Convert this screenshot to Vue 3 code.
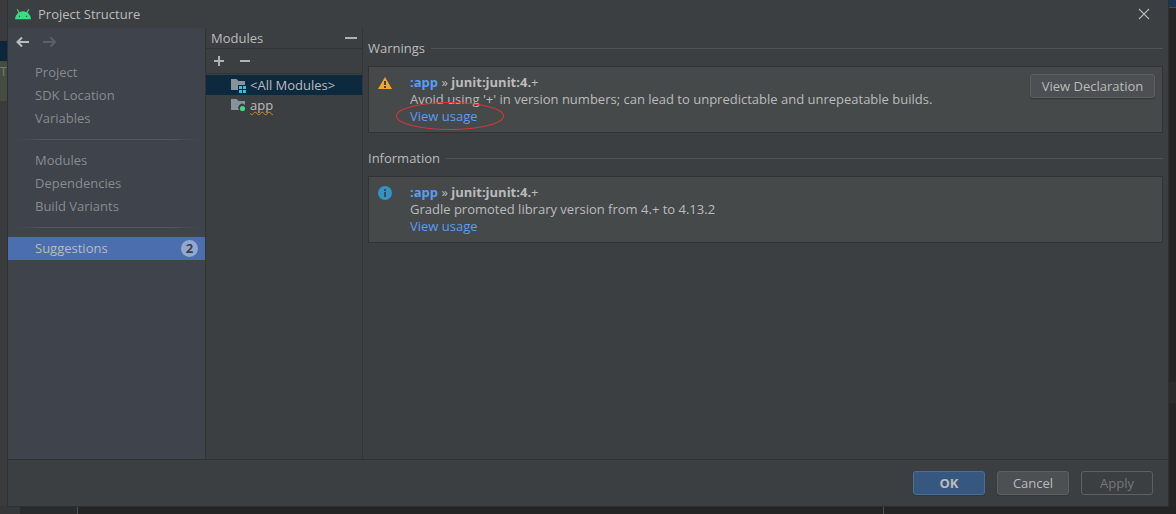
<script setup>
const navGroups = [
  [{ label: 'Project' }, { label: 'SDK Location' }, { label: 'Variables' }],
  [{ label: 'Modules' }, { label: 'Dependencies' }, { label: 'Build Variants' }],
  [{ label: 'Suggestions', count: 2, active: true }],
]

const sections = [
  {
    title: 'Warnings',
    kind: 'warning',
    text: "Avoid using '+' in version numbers; can lead to unpredictable and unrepeatable builds.",
    action: 'View Declaration',
    circled: true,
  },
  {
    title: 'Information',
    kind: 'info',
    text: 'Gradle promoted library version from 4.+ to 4.13.2',
  },
]
</script>

<template>
  <div class="desktop">
    <div class="edge-left">
      <div class="edge-selected"></div>
      <div class="edge-file">Te</div>
    </div>

    <main class="dialog">
      <header class="titlebar">
        <svg class="android" width="16" height="11" viewBox="0 0 16 11" aria-hidden="true">
          <path d="M0 10.300C.3 6 3.400 2.200 8 2.200s7.700 3.800 8 8.100z" fill="#3ddc84" />
          <path d="M4.300 4 2.500.7M11.700 4 13.500.7" stroke="#3ddc84" stroke-width="1.200" stroke-linecap="round" />
          <circle cx="4.500" cy="7.300" r=".7" fill="#2f4a3b" />
          <circle cx="11.500" cy="7.300" r=".7" fill="#2f4a3b" />
        </svg>
        <h1>Project Structure</h1>
        <button class="close" aria-label="Close">
          <svg width="12" height="12" viewBox="0 0 12 12"><path d="M1 1l10 10M11 1L1 11" stroke="#b4b6b7" stroke-width="1.100" /></svg>
        </button>
      </header>

      <div class="body">
        <nav class="sidebar">
          <div class="history">
            <button aria-label="Back">
              <svg width="14" height="12" viewBox="0 0 14 12"><path d="M13 6H1.500M6 1.500 1.500 6 6 10.500" fill="none" stroke="#b9bcbe" stroke-width="2" /></svg>
            </button>
            <button aria-label="Forward" disabled>
              <svg width="14" height="12" viewBox="0 0 14 12"><path d="M0 6h12M7.500 1.500 12 6 7.500 10.500" fill="none" stroke="#5d6064" stroke-width="2" /></svg>
            </button>
          </div>
          <div v-for="(group, i) in navGroups" :key="i" class="group">
            <a v-for="item in group" :key="item.label" href="#" class="nav-item" :class="{ active: item.active }">
              <span>{{ item.label }}</span>
              <span v-if="item.count" class="count">{{ item.count }}</span>
            </a>
          </div>
        </nav>

        <section class="modules">
          <div class="modules-head">
            <h2>Modules</h2>
            <button aria-label="Hide">
              <svg width="12" height="12" viewBox="0 0 12 12"><path d="M0 6h12" stroke="#afb1b3" stroke-width="2" /></svg>
            </button>
          </div>
          <div class="modules-tools">
            <button aria-label="Add">
              <svg width="12" height="12" viewBox="0 0 12 12"><path d="M1 6h10M6 1v10" stroke="#afb1b3" stroke-width="2" /></svg>
            </button>
            <button aria-label="Remove">
              <svg width="12" height="12" viewBox="0 0 12 12"><path d="M1 6h10" stroke="#afb1b3" stroke-width="2" /></svg>
            </button>
          </div>
          <ul>
            <li class="selected">
              <svg width="16" height="16" viewBox="0 0 16 16" aria-hidden="true">
                <path d="M0 2h5.500L7.500 4H14v4H7v5H0z" fill="#87939a" />
                <path d="M8 9h3v3H8zM12 9h3v3h-3zM8 13h3v3H8zM12 13h3v3h-3z" fill="#40b6e0" />
              </svg>
              <span>&lt;All Modules&gt;</span>
            </li>
            <li>
              <svg width="16" height="16" viewBox="0 0 16 16" aria-hidden="true">
                <path d="M0 2h5.500L7.500 4H14v4.100A3.600 3.600 0 0 0 8.200 13H0z" fill="#87939a" />
                <circle cx="11.500" cy="11.500" r="2.600" fill="#3ddc84" />
              </svg>
              <span class="typo">app</span>
            </li>
          </ul>
        </section>

        <div class="content">
          <section v-for="s in sections" :key="s.title">
            <h2 class="section-title">{{ s.title }}</h2>
            <article class="card">
              <svg v-if="s.kind === 'warning'" class="kind" width="14" height="14" viewBox="0 0 14 14" role="img" aria-label="Warning">
                <path d="M7 1l7 12H0z" fill="#f0a732" />
                <path d="M6 5h2v4H6zM6 10h2v2H6z" fill="#45443a" />
              </svg>
              <svg v-else class="kind" width="14" height="14" viewBox="0 0 14 14" role="img" aria-label="Information">
                <circle cx="7" cy="7" r="7" fill="#3592c4" />
                <path d="M6 3h2v2H6zM6 6h2v5H6z" fill="#3a4a52" />
              </svg>
              <div class="message">
                <p><a href="#" class="path">:app</a> » <b>junit:junit:4.</b>+</p>
                <p>{{ s.text }}</p>
                <p>
                  <a href="#" class="usage">View usage
                    <svg v-if="s.circled" class="ring" width="110" height="30" viewBox="0 0 110 30" aria-hidden="true">
                      <ellipse cx="55" cy="15" rx="53.500" ry="13.500" fill="none" stroke="#d63636" stroke-width="1.100" />
                    </svg>
                  </a>
                </p>
              </div>
              <button v-if="s.action" class="btn wide">{{ s.action }}</button>
            </article>
          </section>
        </div>
      </div>

      <footer>
        <button class="btn primary">OK</button>
        <button class="btn">Cancel</button>
        <button class="btn" disabled>Apply</button>
      </footer>
    </main>

    <div class="edge-right">
      <div class="edge-blue"></div>
      <div class="edge-dark"></div>
      <div class="edge-band"></div>
    </div>
    <div class="edge-bottom">
      <div class="tool-strip"></div>
      <div class="tree-strip"></div>
      <div class="editor-strip"></div>
      <div class="editor-strip last"></div>
    </div>
  </div>
</template>

<style>
body {
  margin: 0;
  background: #262728;
}
</style>

<style scoped>
.desktop {
  display: grid;
  grid-template-columns: 8px minmax(0, 1fr) 8px;
  grid-template-rows: 1fr 8px;
  min-height: 100vh;
  font: 13px/17px "Open Sans", "Noto Sans", sans-serif;
  color: #bbbbbb;
}
h1, h2, p, ul {
  margin: 0;
  padding: 0;
  font-size: 13px;
  font-weight: 400;
}
a {
  color: #589df6;
  text-decoration: none;
}
button {
  font: inherit;
  color: inherit;
  padding: 0;
  border: 0;
  background: none;
}
svg {
  display: block;
  flex: none;
}
.edge-left {
  background: #393b3c;
  padding-top: 41px;
}
.edge-selected {
  height: 20px;
  background: #0c263c;
}
.edge-file {
  height: 40px;
  line-height: 20px;
  background: #454d43;
  color: #77796f;
}
.edge-right {
  display: flex;
  flex-direction: column;
  background: #262626;
}
.edge-blue {
  height: 7px;
  background: #1d3657;
  border-bottom: 1px solid #4a4b4c;
}
.edge-dark {
  height: 374px;
}
.edge-band {
  height: 21px;
  background: #2c2c2c;
}
.edge-bottom {
  grid-column: 1 / -1;
  display: grid;
  grid-template-columns: 20px 57px 807fr 293fr;
  background: #242424;
}
.tool-strip {
  background: #353738;
}
.tree-strip {
  background: #292a2c;
}
.editor-strip {
  border-left: 1px solid #515151;
}
.dialog {
  position: relative;
  display: flex;
  flex-direction: column;
  background: #3c3f41;
  box-shadow: 0 0 0 1px #2d2f30;
}
.titlebar {
  display: flex;
  align-items: center;
  height: 28px;
  padding: 0 18px 0 7px;
}
.titlebar h1 {
  flex: 1;
  margin-left: 7px;
}
.body {
  flex: 1;
  display: grid;
  grid-template-columns: 198px 157px minmax(0, 1fr);
}
.sidebar {
  background: #3e434c;
  border-right: 1px solid #323435;
}
.history {
  display: flex;
  gap: 13px;
  padding: 8px 8px 13px;
}
.group + .group::before {
  content: "";
  display: block;
  height: 1px;
  margin: 9px 6px 9px 8px;
  background: linear-gradient(90deg, transparent, #54575b 15%, #54575b 85%, transparent);
}
.nav-item {
  display: flex;
  align-items: center;
  justify-content: space-between;
  height: 23px;
  padding: 0 7px 0 27px;
  color: #898b8e;
}
.nav-item.active {
  background: #4b6eaf;
  color: #bbbbbb;
}
.count {
  width: 17px;
  border-radius: 9px;
  background: #93a8cf;
  color: #3c4049;
  font-weight: 700;
  text-align: center;
}
.modules {
  border-right: 1px solid #323435;
}
.modules-head {
  display: flex;
  align-items: center;
  justify-content: space-between;
  height: 20px;
  padding: 0 5px;
  border-bottom: 1px solid #323435;
}
.modules-tools {
  display: flex;
  align-items: center;
  gap: 14px;
  height: 24px;
  padding: 0 7px;
  border-bottom: 1px solid #323435;
}
.modules ul {
  list-style: none;
  padding-top: 1px;
}
.modules li {
  display: flex;
  align-items: center;
  gap: 3px;
  height: 20px;
  padding-left: 25px;
}
.modules .selected {
  background: #0d293e;
}
.typo {
  text-decoration: underline wavy #c98a28 1px;
  text-decoration-skip-ink: none;
  text-underline-offset: 1px;
}
.content {
  padding: 12px 5px 0;
}
.content section {
  margin-bottom: 17px;
}
.section-title {
  display: flex;
  align-items: center;
  gap: 6px;
  margin-bottom: 9px;
}
.section-title::after {
  content: "";
  flex: 1;
  height: 1px;
  background: #515354;
}
.card {
  display: flex;
  align-items: flex-start;
  padding: 7px;
  background: #45494a;
  border: 1px solid #323232;
}
.kind {
  margin: 2px 18px 0 2px;
}
.message {
  flex: 1;
}
.path, b {
  font-weight: 700;
}
.usage {
  position: relative;
}
.ring {
  position: absolute;
  left: -15px;
  top: -6px;
}
.btn {
  box-sizing: border-box;
  width: 72px;
  height: 24px;
  background: #4c5052;
  border: 1px solid #5e6060;
  border-radius: 3px;
  box-shadow: 0 1px 1px #343637;
}
.btn.wide {
  width: 125px;
}
.btn.primary {
  background: #365880;
  border-color: #4c708c;
  font-weight: 700;
}
.btn:disabled {
  background: none;
  box-shadow: none;
  color: #777777;
}
footer {
  display: flex;
  justify-content: flex-end;
  gap: 12px;
  padding: 11px 15px;
  border-top: 1px solid #2f3132;
}
</style>
